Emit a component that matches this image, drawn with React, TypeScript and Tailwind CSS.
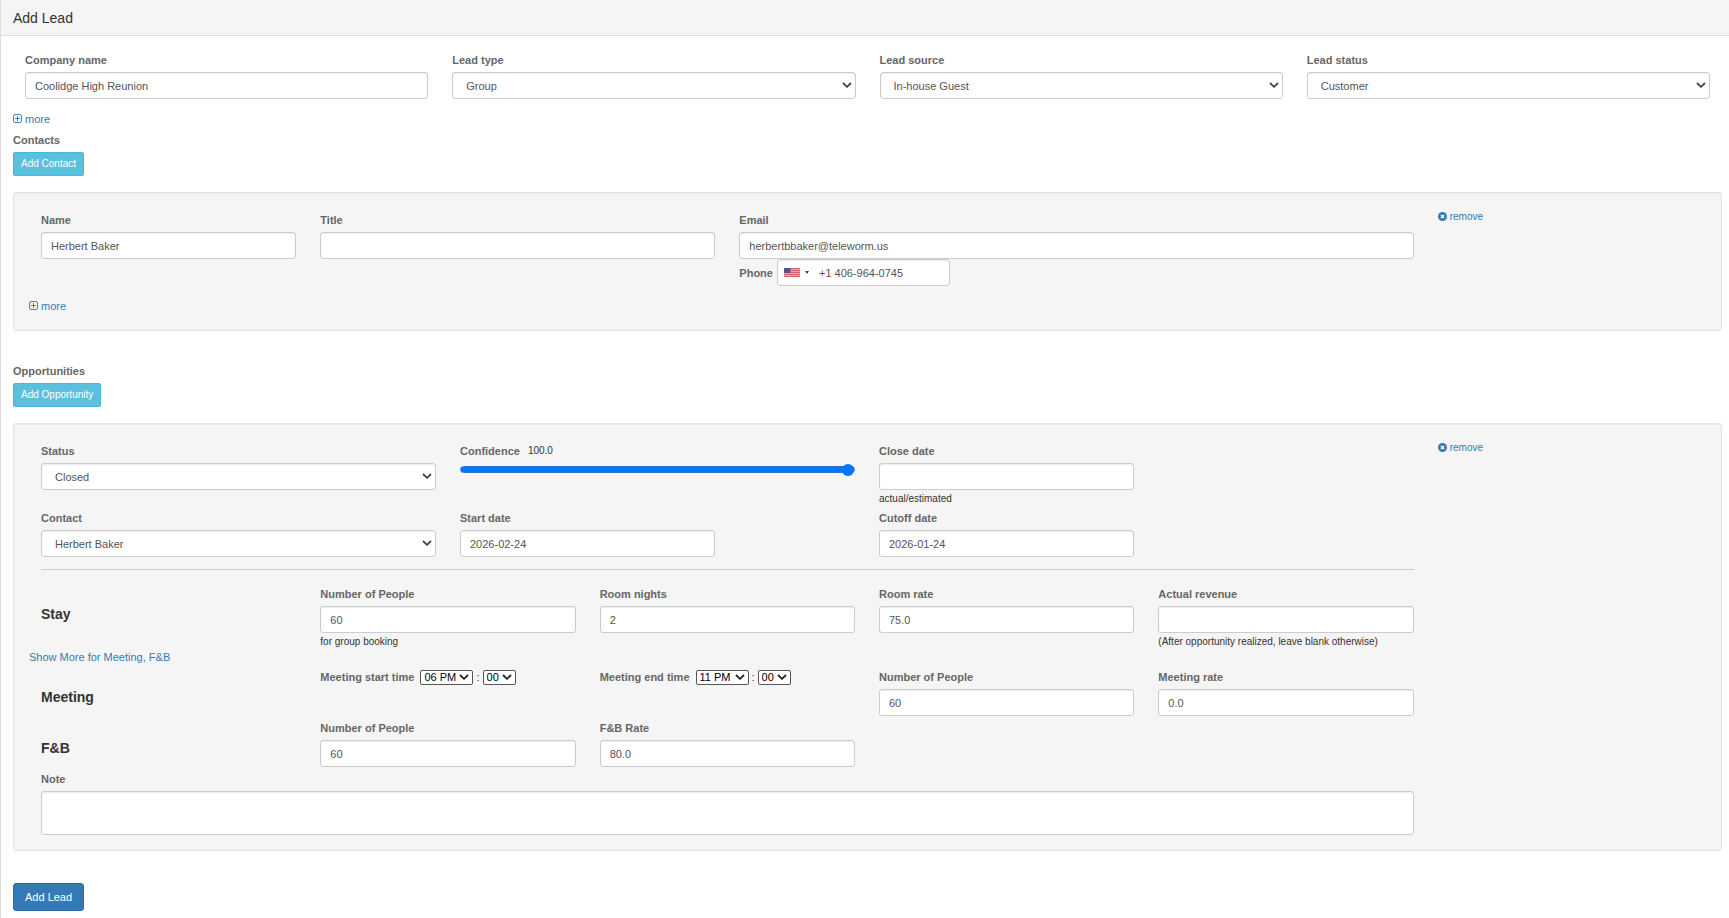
import React, { useId, useState } from "react";

const control =
  "block w-full h-[27px] px-[9px] rounded-[3px] border border-[#ccc] bg-white text-[11px] leading-4 text-[#555] shadow-[inset_0_1px_1px_rgba(0,0,0,0.075)] outline-none focus:border-[#66afe9]";

const labelText = "text-[11px] leading-[18px] font-bold text-[#666]";

const Chevron = ({ className }: { className: string }) => (
  <svg viewBox="0 0 10 6" className={`pointer-events-none absolute w-[10px] h-[6px] ${className}`}>
    <path d="M1 1 L5 4.8 L9 1" fill="none" stroke="currentColor" strokeWidth="1.8" />
  </svg>
);

const PlusSquare = () => (
  <svg viewBox="0 0 9 10" className="w-[9px] h-[10px]" fill="none" stroke="currentColor">
    <rect x="0.5" y="0.5" width="8" height="8" rx="1.5" strokeWidth="0.9" />
    <path d="M4.5 2V7M2 4.5H7" strokeWidth="0.9" />
  </svg>
);

const RemoveSign = () => (
  <svg viewBox="0 0 9 10" className="w-[9px] h-[10px]">
    <circle cx="4.5" cy="4.5" r="4.5" fill="currentColor" />
    <path d="M3 3L6 6M6 3L3 6" stroke="#f5f5f5" strokeWidth="1.7" />
  </svg>
);

type FieldProps = {
  label: string;
  value?: string;
  type?: string;
  help?: string;
  className?: string;
};

const Field = ({ label, value = "", type = "text", help, className = "" }: FieldProps) => {
  const id = useId();
  return (
    <div className={`px-3 ${className}`}>
      <label htmlFor={id} className={`block mb-[3px] ${labelText}`}>{label}</label>
      <input id={id} type={type} defaultValue={value} className={control} />
      {help && <p className="-mb-[2px] text-[10px] leading-[18px] text-[#333]">{help}</p>}
    </div>
  );
};

const SelectField = ({ label, options, className = "" }: { label: string; options: string[]; className?: string }) => {
  const id = useId();
  return (
    <div className={`px-3 ${className}`}>
      <label htmlFor={id} className={`block mb-[3px] ${labelText}`}>{label}</label>
      <div className="relative">
        <select id={id} className={`${control} appearance-none pl-[13px]`}>
          {options.map((o) => <option key={o}>{o}</option>)}
        </select>
        <Chevron className="right-1 top-[10px] text-[#444]" />
      </div>
    </div>
  );
};

const smallSelect =
  "block h-[15px] pl-[3px] rounded-[2px] border border-[#555] bg-white appearance-none text-[11px] leading-3 text-black outline-none";

const TimeField = ({ label, hour }: { label: string; hour: string }) => {
  const id = useId();
  return (
    <div className="col-span-2 px-3">
      <div className="flex items-center gap-[3px] h-[18px]">
        <label htmlFor={id} className={`pr-[3px] whitespace-nowrap ${labelText}`}>{label}</label>
        <div className="relative">
          <select id={id} className={`${smallSelect} w-[53px]`}>
            <option>{hour}</option>
          </select>
          <Chevron className="right-1 top-[4px] text-[#222]" />
        </div>
        <span className="text-[11px] leading-[18px] text-[#333]">:</span>
        <div className="relative">
          <select aria-label={`${label} minutes`} className={`${smallSelect} w-[33px]`}>
            <option>00</option>
            <option>15</option>
            <option>30</option>
            <option>45</option>
          </select>
          <Chevron className="right-1 top-[4px] text-[#222]" />
        </div>
      </div>
    </div>
  );
};

const MoreLink = () => (
  <a href="#" className="flex w-fit items-center gap-[3px] mt-[11px] text-[11px] leading-[18px] text-[#337ab7]">
    <PlusSquare />
    more
  </a>
);

const RemoveLink = () => (
  <div className="col-span-2 px-3">
    <a href="#" className="flex w-fit items-center gap-[3px] text-[10px] leading-3 text-[#337ab7]">
      <RemoveSign />
      remove
    </a>
  </div>
);

const Well = ({ children }: { children: React.ReactNode }) => (
  <div className="mt-4 pl-[15px] pr-4 pt-[18px] pb-[15px] rounded-[3px] border border-[#e3e3e3] bg-[#f5f5f5] shadow-[inset_0_1px_1px_rgba(0,0,0,0.05)]">
    {children}
  </div>
);

const SectionHead = ({ title, action }: { title: string; action: string }) => (
  <>
    <h3 className={`mb-[3px] ${labelText}`}>{title}</h3>
    <button type="button" className="block h-6 px-[7px] rounded-[2px] border border-[#46b8da] bg-[#5bc0de] text-[10px] leading-4 text-white">
      {action}
    </button>
  </>
);

const RowTitle = ({ children }: { children: React.ReactNode }) => (
  <h4 className="col-span-2 px-3 mt-[19px] text-[14px] leading-5 font-bold text-[#333]">{children}</h4>
);

const Flag = () => (
  <svg viewBox="0 0 16 9" className="w-4 h-[9px]">
    <rect width="16" height="9" fill="#d9626f" />
    <path d="M0 1.5H16M0 3.5H16M0 5.5H16M0 7.5H16" stroke="#eeb4ba" strokeWidth="0.8" />
    <rect width="6.5" height="5" fill="#55558a" />
  </svg>
);

const PhoneField = () => (
  <div className="flex items-center gap-1">
    <label htmlFor="phone" className={labelText}>Phone</label>
    <div className="relative w-[173px]">
      <input id="phone" type="tel" defaultValue="+1 406-964-0745" className={`${control} pl-[41px]`} />
      <button type="button" aria-label="Country" className="absolute left-[7px] top-0 flex h-[27px] items-center gap-[5px]">
        <Flag />
        <svg viewBox="0 0 4 3" className="w-[4px] h-[3px]">
          <path d="M0 0H4L2 3Z" fill="#444" />
        </svg>
      </button>
    </div>
  </div>
);

const Confidence = () => {
  const [value, setValue] = useState(100);
  return (
    <div className="col-span-3 px-3">
      <div className="flex items-center gap-2 h-[18px] mb-[6px]">
        <label htmlFor="confidence" className={labelText}>Confidence</label>
        <output htmlFor="confidence" className="text-[10px] leading-[18px] text-[#333]">{value.toFixed(1)}</output>
      </div>
      <input
        id="confidence"
        type="range"
        min={0}
        max={100}
        value={value}
        onChange={(e) => setValue(Number(e.target.value))}
        style={{ backgroundImage: `linear-gradient(to right, #0075ff ${value}%, #efefef ${value}%)` }}
        className="block w-full h-[7px] appearance-none rounded-full border border-[#2f74d0] [&::-webkit-slider-thumb]:appearance-none [&::-webkit-slider-thumb]:size-3 [&::-webkit-slider-thumb]:rounded-full [&::-webkit-slider-thumb]:bg-[#0075ff]"
      />
    </div>
  );
};

const App = () => {
  return (
    <div className="min-h-screen border-l border-[#ddd] bg-white font-['Liberation_Sans',Arial,sans-serif]">
      <header className="px-3 pt-2 pb-[6px] border-b border-[#ddd] bg-[#f5f5f5]">
        <h1 className="text-[14px] leading-[21px] text-[#333]">Add Lead</h1>
      </header>

      <form className="pl-3 pr-[7px] pt-[15px] pb-[7px]" onSubmit={(e) => e.preventDefault()}>
        <div className="grid grid-cols-4">
          <Field label="Company name" value="Coolidge High Reunion" />
          <SelectField label="Lead type" options={["Group", "Individual"]} />
          <SelectField label="Lead source" options={["In-house Guest", "Website"]} />
          <SelectField label="Lead status" options={["Customer", "Prospect"]} />
        </div>
        <MoreLink />

        <section className="mt-[3px]">
          <SectionHead title="Contacts" action="Add Contact" />
          <Well>
            <div className="grid grid-cols-12">
              <Field className="col-span-2" label="Name" value="Herbert Baker" />
              <Field className="col-span-3" label="Title" />
              <div className="col-span-5">
                <Field label="Email" type="email" value="herbertbbaker@teleworm.us" />
                <div className="px-3">
                  <PhoneField />
                </div>
              </div>
              <RemoveLink />
            </div>
            <MoreLink />
          </Well>
        </section>

        <section className="mt-[31px]">
          <SectionHead title="Opportunities" action="Add Opportunity" />
          <Well>
            <div className="grid grid-cols-12 mb-[3px]">
              <SelectField className="col-span-3" label="Status" options={["Closed", "Open"]} />
              <Confidence />
              <Field className="col-span-2" label="Close date" help="actual/estimated" />
              <div className="col-span-2" />
              <RemoveLink />
            </div>
            <div className="grid grid-cols-12">
              <SelectField className="col-span-3" label="Contact" options={["Herbert Baker"]} />
              <Field className="col-span-2" label="Start date" value="2026-02-24" />
              <div />
              <Field className="col-span-2" label="Cutoff date" value="2026-01-24" />
            </div>
            <div className="grid grid-cols-12">
              <div className="col-span-10 px-3">
                <hr className="mt-3 mb-[15px] border-t border-[#ccc]" />
              </div>
            </div>

            <div className="grid grid-cols-12">
              <RowTitle>Stay</RowTitle>
              <Field className="col-span-2" label="Number of People" value="60" help="for group booking" />
              <Field className="col-span-2" label="Room nights" value="2" />
              <Field className="col-span-2" label="Room rate" value="75.0" />
              <Field className="col-span-2" label="Actual revenue" help="(After opportunity realized, leave blank otherwise)" />
            </div>
            <a href="#" className="block w-fit mb-[3px] text-[11px] leading-4 text-[#337ab7]">Show More for Meeting, F&amp;B</a>

            <div className="grid grid-cols-12 mb-[3px]">
              <RowTitle>Meeting</RowTitle>
              <TimeField label="Meeting start time" hour="06 PM" />
              <TimeField label="Meeting end time" hour="11 PM" />
              <Field className="col-span-2" label="Number of People" value="60" />
              <Field className="col-span-2" label="Meeting rate" value="0.0" />
            </div>
            <div className="grid grid-cols-12 mb-[3px]">
              <RowTitle>F&amp;B</RowTitle>
              <Field className="col-span-2" label="Number of People" value="60" />
              <Field className="col-span-2" label="F&B Rate" value="80.0" />
            </div>
            <div className="grid grid-cols-12">
              <div className="col-span-10 px-3">
                <label htmlFor="note" className={`block mb-[3px] ${labelText}`}>Note</label>
                <textarea id="note" className="block w-full h-11 px-[9px] py-1 resize-none rounded-[3px] border border-[#ccc] bg-white text-[11px] leading-4 text-[#555] shadow-[inset_0_1px_1px_rgba(0,0,0,0.075)] outline-none" />
              </div>
            </div>
          </Well>
        </section>

        <button type="submit" className="block mt-8 h-7 px-[11px] rounded-[3px] border border-[#2e6da4] bg-[#337ab7] text-[11px] leading-4 text-white">
          Add Lead
        </button>
      </form>
    </div>
  );
};

export default App;
